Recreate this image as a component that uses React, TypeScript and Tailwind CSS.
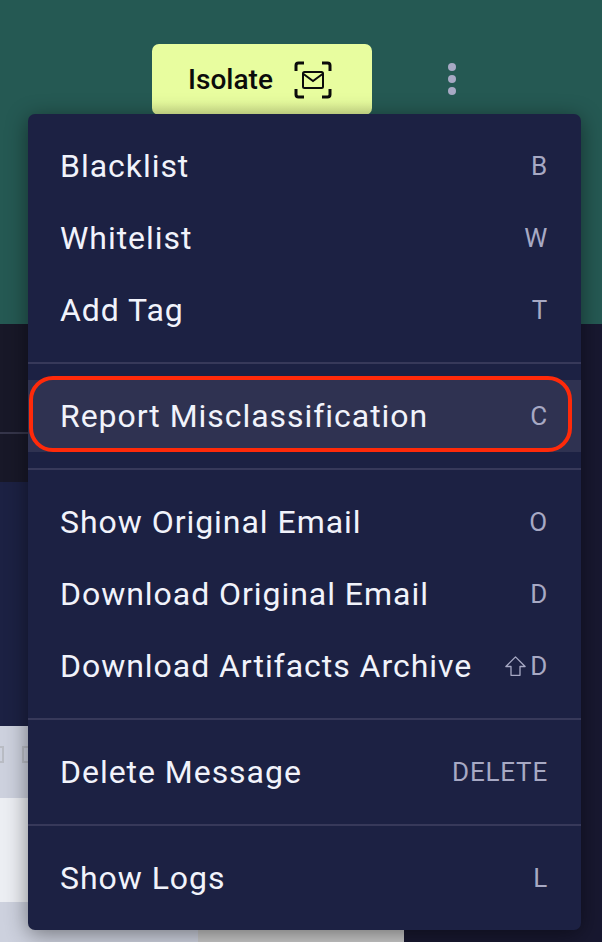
const FONT = "font-['Roboto','Liberation_Sans',sans-serif]";

function IsolateIcon() {
  return (
    <svg width="38" height="38" viewBox="0 0 38 38" fill="none" stroke="#0b0b0b" className="ml-[21px]">
      <path d="M2 10V4.500A2.500 2.500 0 0 1 4.500 2H10M28 2h5.500A2.500 2.500 0 0 1 36 4.500V10M36 28v5.500A2.500 2.500 0 0 1 33.500 36H28M10 36H4.500A2.500 2.500 0 0 1 2 33.500V28" strokeWidth="3" />
      <rect x="9" y="11" width="20" height="16" rx="1.500" strokeWidth="2" />
      <path d="M9.500 13l9.500 7 9.500-7" strokeWidth="2" />
    </svg>
  );
}

function ShiftIcon() {
  return (
    <svg width="21" height="20" viewBox="0 0 21 20" fill="none" stroke="#a7a9c4" strokeWidth="1.300" className="mr-[4px]">
      <path d="M10.500 0.900 0.900 10.500H6V19.300H15V10.500H20.100Z" strokeLinejoin="round" />
    </svg>
  );
}

function MenuRow({ label, hint, shift, active }: { label: string; hint: string; shift?: boolean; active?: boolean }) {
  return (
    <div className={`flex h-[72px] items-center justify-between pl-[32px] pr-[33px] ${active ? "bg-[#2f3251]" : ""}`}>
      <span className="text-[32px] tracking-[0.96px] text-[#f1f3fb]">{label}</span>
      <span className="flex items-center text-[26px] tracking-[0.800px] text-[#a7a9c4]">
        {shift && <ShiftIcon />}
        {hint}
      </span>
    </div>
  );
}

function Divider() {
  return <div className="my-[16px] h-[2px] bg-[#37395a]" />;
}

export default function App() {
  return (
    <div className={`relative flex h-[942px] w-[602px] flex-col overflow-hidden bg-[#181830] ${FONT}`}>
      {/* page behind the menu */}
      <div className="flex h-[324px] shrink-0 items-start bg-[#255953] pl-[152px] pt-[44px]">
        <button className="flex h-[71px] w-[220px] items-center justify-center rounded-[7px] bg-gradient-to-b from-[#e8fd9f] from-80% to-[#dcef94] pr-[4px] text-[28px] font-medium text-[#0b0b0b]">
          Isolate
          <IsolateIcon />
        </button>
        <div className="ml-[76px] mt-[19px] flex flex-col gap-[4px]">
          <span className="h-[8px] w-[8px] rounded-full bg-[#a7a9c4]" />
          <span className="h-[8px] w-[8px] rounded-full bg-[#a7a9c4]" />
          <span className="h-[8px] w-[8px] rounded-full bg-[#a7a9c4]" />
        </div>
      </div>
      <div className="flex h-[618px] w-full flex-col">
        <div className="h-[110px] w-[28px] border-b-2 border-[#35354a] bg-[#181828]" />
        <div className="h-[48px] w-[28px] bg-[#181828]" />
        <div className="h-[244px] w-[28px] bg-[#1c2143]" />
        <div className="flex h-[72px] w-[28px] items-center gap-[18px] overflow-hidden bg-[#cdd1de] pb-[16px]">
          <span className="ml-[-14px] h-[17px] w-[18px] shrink-0 border-2 border-[#b9bcc4]" />
          <span className="h-[17px] w-[18px] shrink-0 border-2 border-[#b9bcc4]" />
        </div>
        <div className="h-[104px] w-[28px] bg-[#eceef3]" />
        <div className="w-[198px] flex-1 bg-[#cdd1de]" />
      </div>
      <div className="absolute bottom-0 left-[198px] h-[12px] w-[206px] bg-[#c8c8c8]" />

      {/* menu */}
      <div className="absolute left-[28px] top-[114px] h-[816px] w-[553px] rounded-[7px] bg-[#1c2143] py-[16px] shadow-[0_4px_22px_rgba(0,0,0,0.45)]">
        <MenuRow label="Blacklist" hint="B" />
        <MenuRow label="Whitelist" hint="W" />
        <MenuRow label="Add Tag" hint="T" />
        <Divider />
        <div className="relative">
          <MenuRow label="Report Misclassification" hint="C" active />
          <div className="absolute bottom-0 left-[1px] right-[9px] top-[-4px] rounded-[24px] border-[4px] border-[#ff2a0a]" />
        </div>
        <Divider />
        <MenuRow label="Show Original Email" hint="O" />
        <MenuRow label="Download Original Email" hint="D" />
        <MenuRow label="Download Artifacts Archive" hint="D" shift />
        <Divider />
        <MenuRow label="Delete Message" hint="DELETE" />
        <Divider />
        <MenuRow label="Show Logs" hint="L" />
      </div>
    </div>
  );
}
